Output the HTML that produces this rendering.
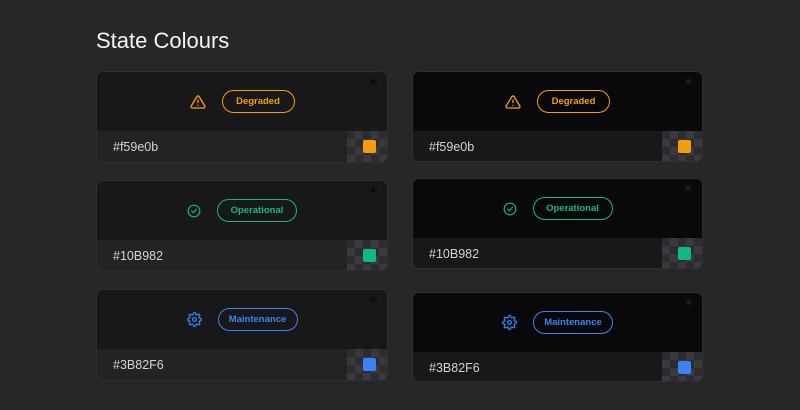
<!DOCTYPE html>
<html><head><style>
*{margin:0;padding:0;box-sizing:border-box}
body{width:800px;height:410px;background:#27272a;font-family:"Liberation Sans",sans-serif;position:relative;overflow:hidden}
h1{position:absolute;left:96px;top:28px;font-size:22px;font-weight:400;color:#f4f4f5}
.card{position:absolute;border-radius:6px;overflow:hidden;box-shadow:0 0 0 1px rgba(255,255,255,0.04)}
.top{position:absolute;left:0;right:0;top:0;height:59px;display:flex;align-items:center;justify-content:center}
.bot{position:absolute;left:0;right:0;top:59px;bottom:0}
.L .top{background:#18181b}.L .bot{background:#232326}
.D .top{background:#09090b}.D .bot{background:#18181b}
.hex{position:absolute;left:16px;top:9px;font-size:12.5px;color:#d4d4d8}
.chk{position:absolute;right:0;top:0;width:40px;height:32px;
background-color:#2c2c30;background-image:linear-gradient(45deg,#3a3a3e 25%,transparent 25%,transparent 75%,#3a3a3e 75%),linear-gradient(45deg,#3a3a3e 25%,transparent 25%,transparent 75%,#3a3a3e 75%);background-size:16px 16px;background-position:0 0,8px 8px}
.sw{position:absolute;right:11px;top:9px;width:13px;height:13px;border-radius:2px}
.pill{height:23px;border:1.5px solid;border-radius:12px;font-size:9.5px;font-weight:700;display:flex;align-items:center;justify-content:center;margin-left:16px}
.sun{position:absolute;right:8px;top:2px;font-size:13px;color:#09090b}
.D .sun{color:#222225}
svg{display:block}
</style></head><body>
<h1>State Colours</h1>

<div class="card L" style="left:97px;top:72px;width:290px;height:90px">
 <div class="top"><svg width="16" height="16" viewBox="0 0 24 24" fill="none" stroke="#f59e0b" stroke-width="2" stroke-linecap="round" stroke-linejoin="round"><path d="M10.3 3.9L1.8 18a2 2 0 0 0 1.7 3h17a2 2 0 0 0 1.7-3L13.7 3.9a2 2 0 0 0-3.4 0z"/><path d="M12 9v4M12 17h.01"/></svg><div class="pill" style="width:73px;color:#f59e0b;border-color:#f59e0b">Degraded</div><span class="sun">☀</span></div>
 <div class="bot"><span class="hex">#f59e0b</span><div class="chk"></div><div class="sw" style="background:#f59e0b"></div></div>
</div>
<div class="card D" style="left:413px;top:72px;width:289px;height:89px">
 <div class="top"><svg width="16" height="16" viewBox="0 0 24 24" fill="none" stroke="#f59e0b" stroke-width="2" stroke-linecap="round" stroke-linejoin="round"><path d="M10.3 3.9L1.8 18a2 2 0 0 0 1.7 3h17a2 2 0 0 0 1.7-3L13.7 3.9a2 2 0 0 0-3.4 0z"/><path d="M12 9v4M12 17h.01"/></svg><div class="pill" style="width:73px;color:#f59e0b;border-color:#f59e0b">Degraded</div><span class="sun">☀</span></div>
 <div class="bot"><span class="hex">#f59e0b</span><div class="chk"></div><div class="sw" style="background:#f59e0b"></div></div>
</div>

<div class="card L" style="left:97px;top:181px;width:290px;height:89px">
 <div class="top"><svg width="14" height="14" viewBox="0 0 24 24" fill="none" stroke="#10b981" stroke-width="2" stroke-linecap="round" stroke-linejoin="round"><circle cx="12" cy="12" r="10"/><path d="M8 12l3 3 5-6"/></svg><div class="pill" style="width:80px;color:#10b981;border-color:#10b981">Operational</div><span class="sun">☀</span></div>
 <div class="bot"><span class="hex">#10B982</span><div class="chk"></div><div class="sw" style="background:#10b981"></div></div>
</div>
<div class="card D" style="left:413px;top:179px;width:289px;height:89px">
 <div class="top"><svg width="14" height="14" viewBox="0 0 24 24" fill="none" stroke="#10b981" stroke-width="2" stroke-linecap="round" stroke-linejoin="round"><circle cx="12" cy="12" r="10"/><path d="M8 12l3 3 5-6"/></svg><div class="pill" style="width:80px;color:#10b981;border-color:#10b981">Operational</div><span class="sun">☀</span></div>
 <div class="bot"><span class="hex">#10B982</span><div class="chk"></div><div class="sw" style="background:#10b981"></div></div>
</div>

<div class="card L" style="left:97px;top:290px;width:290px;height:90px">
 <div class="top"><svg width="15" height="15" viewBox="0 0 24 24" fill="none" stroke="#3b82f6" stroke-width="2" stroke-linecap="round" stroke-linejoin="round"><circle cx="12" cy="12" r="3"/><path d="M19.4 15a1.7 1.7 0 0 0 .3 1.8l.1.1a2 2 0 1 1-2.8 2.8l-.1-.1a1.7 1.7 0 0 0-1.8-.3 1.7 1.7 0 0 0-1 1.5V21a2 2 0 1 1-4 0v-.1a1.7 1.7 0 0 0-1.1-1.5 1.7 1.7 0 0 0-1.8.3l-.1.1a2 2 0 1 1-2.8-2.8l.1-.1a1.7 1.7 0 0 0 .3-1.8 1.7 1.7 0 0 0-1.5-1H3a2 2 0 1 1 0-4h.1a1.7 1.7 0 0 0 1.5-1.1 1.7 1.7 0 0 0-.3-1.8l-.1-.1a2 2 0 1 1 2.8-2.8l.1.1a1.7 1.7 0 0 0 1.8.3H9a1.7 1.7 0 0 0 1-1.5V3a2 2 0 1 1 4 0v.1a1.7 1.7 0 0 0 1 1.5 1.7 1.7 0 0 0 1.8-.3l.1-.1a2 2 0 1 1 2.8 2.8l-.1.1a1.7 1.7 0 0 0-.3 1.8V9a1.7 1.7 0 0 0 1.5 1H21a2 2 0 1 1 0 4h-.1a1.7 1.7 0 0 0-1.5 1z"/></svg><div class="pill" style="width:80px;color:#3b82f6;border-color:#3b82f6">Maintenance</div><span class="sun">☀</span></div>
 <div class="bot"><span class="hex">#3B82F6</span><div class="chk"></div><div class="sw" style="background:#3b82f6"></div></div>
</div>
<div class="card D" style="left:413px;top:293px;width:289px;height:88px">
 <div class="top"><svg width="15" height="15" viewBox="0 0 24 24" fill="none" stroke="#3b82f6" stroke-width="2" stroke-linecap="round" stroke-linejoin="round"><circle cx="12" cy="12" r="3"/><path d="M19.4 15a1.7 1.7 0 0 0 .3 1.8l.1.1a2 2 0 1 1-2.8 2.8l-.1-.1a1.7 1.7 0 0 0-1.8-.3 1.7 1.7 0 0 0-1 1.5V21a2 2 0 1 1-4 0v-.1a1.7 1.7 0 0 0-1.1-1.5 1.7 1.7 0 0 0-1.8.3l-.1.1a2 2 0 1 1-2.8-2.8l.1-.1a1.7 1.7 0 0 0 .3-1.8 1.7 1.7 0 0 0-1.5-1H3a2 2 0 1 1 0-4h.1a1.7 1.7 0 0 0 1.5-1.1 1.7 1.7 0 0 0-.3-1.8l-.1-.1a2 2 0 1 1 2.8-2.8l.1.1a1.7 1.7 0 0 0 1.8.3H9a1.7 1.7 0 0 0 1-1.5V3a2 2 0 1 1 4 0v.1a1.7 1.7 0 0 0 1 1.5 1.7 1.7 0 0 0 1.8-.3l.1-.1a2 2 0 1 1 2.8 2.8l-.1.1a1.7 1.7 0 0 0-.3 1.8V9a1.7 1.7 0 0 0 1.5 1H21a2 2 0 1 1 0 4h-.1a1.7 1.7 0 0 0-1.5 1z"/></svg><div class="pill" style="width:80px;color:#3b82f6;border-color:#3b82f6">Maintenance</div><span class="sun">☀</span></div>
 <div class="bot"><span class="hex">#3B82F6</span><div class="chk"></div><div class="sw" style="background:#3b82f6"></div></div>
</div>
</body></html>
